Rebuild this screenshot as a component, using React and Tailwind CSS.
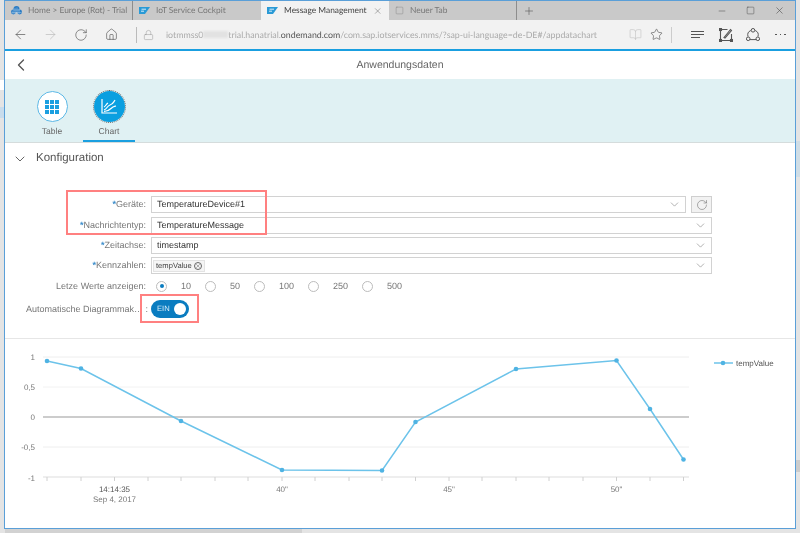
import React from 'react';
import { ArrowLeft, ArrowRight, BookOpen, ChevronDown, ChevronLeft, Home, Lock, Minus, Plus, RotateCw, Square, Star, X } from 'lucide-react';

function SapMark() {
  return (
    <svg width="11" height="7" viewBox="0 0 11 7" className="shrink-0">
      <path d="M0 0h11L6 7H0z" fill="#2a9ad6" />
      <path d="M2.500 2.200h4.500M2 4.200h3" stroke="#fff" strokeWidth="0.8" />
    </svg>
  );
}

function CloudMark() {
  return (
    <svg width="11" height="9" viewBox="0 0 11 9" className="shrink-0">
      <circle cx="5.500" cy="3" r="3" fill="#2b7cc4" />
      <circle cx="2.400" cy="6" r="2.400" fill="#2b7cc4" />
      <circle cx="8.600" cy="6" r="2.400" fill="#2b7cc4" />
      <path d="M2 4.500v4M4 2v6.500M6 1.500v7M8 3v5.500M0.500 6.500h10M2 4h7" stroke="#a9cde8" strokeWidth="0.5" />
    </svg>
  );
}

function Tab({ icon, label, active, close, sep }) {
  return (
    <div className={`w-[128px] h-full flex items-center gap-[6px] pl-[6px] pr-[5px] text-[8.4px] ${active ? 'bg-[#f2f2f2] text-[#444]' : 'text-[#777]'} ${sep ? 'border-r border-[#8d8d8d]' : ''}`}>
      {icon}
      <span className="flex-1 whitespace-nowrap">{label}</span>
      {close && <X className="w-[10px] h-[10px] text-[#666] mr-[2px]" strokeWidth={1.3} />}
    </div>
  );
}

function NoteIcon() {
  return (
    <svg width="14" height="14" viewBox="0 0 14 14" fill="none" stroke="#555" strokeWidth="1.1">
      <path d="M1.500 1.500h7M1.500 1.500v11M1.500 12.500h11M12.500 6v6.500" />
      <path d="M5 9.500l6.500-8 1 1-6.500 7.500z" />
      <rect x="0.500" y="0.500" width="2" height="2" fill="#555" />
      <rect x="0.500" y="11.500" width="2" height="2" fill="#555" />
      <rect x="11.500" y="11.500" width="2" height="2" fill="#555" />
    </svg>
  );
}

function ShareIcon() {
  return (
    <svg width="14" height="14" viewBox="0 0 14 14" fill="none" stroke="#555" strokeWidth="1">
      <path d="M4.800 2.500A5 5 0 0 0 2 8.500M9.200 2.500A5 5 0 0 1 12 8.500M3.800 11.600h6.400" />
      <circle cx="7" cy="2.300" r="1.800" />
      <circle cx="2.200" cy="10.800" r="1.800" />
      <circle cx="11.800" cy="10.800" r="1.800" />
    </svg>
  );
}

function Toolbar() {
  return (
    <div className="h-[29px] bg-[#f2f2f2] flex items-center text-[#555] shrink-0">
      <ArrowLeft className="w-[15px] h-[15px] ml-[8px]" strokeWidth={1.1} />
      <ArrowRight className="w-[15px] h-[15px] ml-[15px] text-[#bbb]" strokeWidth={1.1} />
      <RotateCw className="w-[14px] h-[14px] ml-[16px]" strokeWidth={1.1} />
      <Home className="w-[13px] h-[13px] ml-[17px]" strokeWidth={1.2} />
      <div className="w-px h-[16px] bg-[#bbb] ml-[18px]" />
      <Lock className="w-[11px] h-[12px] ml-[6px] text-[#999]" strokeWidth={1.1} />
      <div className="ml-[12px] w-[431px] text-[8.8px] text-[#aaa] whitespace-nowrap overflow-hidden flex items-center">
        <span>iotmmss0</span>
        <span className="w-[40px] h-[7px] bg-[#e2e2e2] blur-[1px]" />
        <span>trial.hanatrial.</span>
        <span className="text-[#555]">ondemand.com</span>
        <span>/com.sap.iotservices.mms/?sap-ui-language=de-DE#/appdatachart</span>
      </div>
      <BookOpen className="w-[13px] h-[13px] ml-[32px] text-[#c4c4c4]" strokeWidth={1.2} />
      <Star className="w-[13px] h-[13px] ml-[8px]" strokeWidth={1.2} />
      <div className="w-px h-[16px] bg-[#ccc] ml-[8px]" />
      <div className="ml-[19px] w-[13px] flex flex-col gap-[2px]">
        <span className="h-px w-[13px] bg-[#555]" />
        <span className="h-px w-[13px] bg-[#555]" />
        <span className="h-px w-[9px] bg-[#555]" />
      </div>
      <div className="ml-[15px]"><NoteIcon /></div>
      <div className="ml-[13px]"><ShareIcon /></div>
      <div className="ml-[15px] flex gap-[3px]">
        <span className="w-[1.5px] h-[1.5px] bg-[#555]" />
        <span className="w-[1.5px] h-[1.5px] bg-[#555]" />
        <span className="w-[1.5px] h-[1.5px] bg-[#555]" />
      </div>
    </div>
  );
}

function TableIcon() {
  return (
    <svg width="14" height="14" viewBox="0 0 14 14" fill="#1a9fe0">
      {[0, 5, 10].map((y) => [0, 5, 10].map((x) => <rect key={`${x}-${y}`} x={x} y={y} width="4" height="4" />))}
    </svg>
  );
}

function ChartIcon() {
  return (
    <svg width="16" height="15" viewBox="0 0 16 15" fill="none" stroke="#fff" strokeWidth="1.200">
      <path d="M1 0v14h15" />
      <path d="M3 11c3-1 3-4 6-5s3-2 5-5M3 12.500c3 0 5-1 7-3s3-2 5-2.500M3 8c2-1 2-3 4-4" />
    </svg>
  );
}

function Field({ label, required, children, className = 'h-[17px]' }) {
  return (
    <div className={`flex items-center ${className}`}>
      <div className="w-[120px] pt-[1px] text-right text-[9px] text-[#777] whitespace-nowrap">
        {required && <span className="text-[#3f8fcc] font-bold">*</span>}
        {label}
      </div>
      <div className="ml-[5px] flex-1 flex items-center min-w-0">{children}</div>
    </div>
  );
}

function SelectBox({ children, className = 'flex-1' }) {
  return (
    <div className={`h-[17px] border border-[#d2d2d2] bg-white flex items-center pl-[5px] pr-[4px] text-[9px] text-[#333] ${className}`}>
      <div className="flex-1 min-w-0 flex items-center pt-[1px]">{children}</div>
      <ChevronDown className="w-[13px] h-[13px] text-[#888]" strokeWidth={1.2} />
    </div>
  );
}

function Radio({ label, checked, width }) {
  return (
    <div className="flex items-center" style={{ width }}>
      <span className="w-[11px] h-[11px] rounded-full border border-[#bcbcbc] bg-white flex items-center justify-center shrink-0">
        {checked && <span className="w-[4px] h-[4px] rounded-full bg-[#0a7cc0]" />}
      </span>
      <span className="ml-[14px] pt-[1px] text-[9px] text-[#777]">{label}</span>
    </div>
  );
}

const points = [[47, 361], [81, 368.5], [181, 421], [282, 470], [382, 470.5], [415.5, 422], [516, 369], [616.5, 360.5], [650, 409], [683.5, 459.5]];
const ticks = [47, 81, 114.500, 148, 181, 215, 248, 282, 315, 349, 382, 415.500, 449, 482, 516, 549, 583, 616.500, 650, 683.500];

function Chart() {
  const labelClass = 'fill-[#777] text-[8px]';
  return (
    <svg viewBox="5 339 790 189" width="790" height="189" className="block">
      <line x1="43" x2="689" y1="357" y2="357" stroke="#eeeeee" />
      <line x1="43" x2="689" y1="387" y2="387" stroke="#f2f2f2" />
      <line x1="43" x2="689" y1="417" y2="417" stroke="#999999" />
      <line x1="43" x2="689" y1="447" y2="447" stroke="#eeeeee" />
      <line x1="43" x2="689" y1="477" y2="477" stroke="#dddddd" />
      {ticks.map((x) => <line key={x} x1={x} x2={x} y1="477" y2="481" stroke="#d0d0d0" />)}
      <text x="35" y="360" textAnchor="end" className={labelClass}>1</text>
      <text x="35" y="390" textAnchor="end" className={labelClass}>0,5</text>
      <text x="35" y="420" textAnchor="end" className={labelClass}>0</text>
      <text x="35" y="450" textAnchor="end" className={labelClass}>-0,5</text>
      <text x="35" y="481" textAnchor="end" className={labelClass}>-1</text>
      <polyline points={points.map((p) => p.join(',')).join(' ')} fill="none" stroke="#6cc3ea" strokeWidth="1.500" />
      {points.map(([x, y]) => <circle key={x} cx={x} cy={y} r="2.300" fill="#4fb3e3" />)}
      <text x="114.500" y="492" textAnchor="middle" className="fill-[#555] text-[8px]">14:14:35</text>
      <text x="114.500" y="502" textAnchor="middle" className={labelClass}>Sep 4, 2017</text>
      <text x="282" y="492" textAnchor="middle" className={labelClass}>40"</text>
      <text x="449" y="492" textAnchor="middle" className={labelClass}>45"</text>
      <text x="616.500" y="492" textAnchor="middle" className={labelClass}>50"</text>
      <line x1="714" x2="733" y1="363" y2="363" stroke="#6cc3ea" strokeWidth="1.500" />
      <circle cx="723" cy="363" r="2.300" fill="#4fb3e3" />
      <text x="736" y="366" className="fill-[#555] text-[8px]">tempValue</text>
    </svg>
  );
}

export default function App() {
  return (
    <div className="relative w-[800px] h-[533px] bg-[#e4e4e4] overflow-hidden blur-[0.35px] [text-rendering:geometricPrecision] font-[family-name:Liberation_Sans,Arial,sans-serif]">
      {/* bits of the window behind */}
      <div className="absolute left-0 top-[80px] w-[4px] h-[10px] bg-white" />
      <div className="absolute left-0 top-[107px] w-[4px] h-[11px] bg-[#c8dcec]" />
      <div className="absolute right-0 top-[141px] w-[4px] h-[36px] bg-[#cfdde6]" />
      <div className="absolute right-0 top-[460px] w-[4px] h-[12px] bg-[#cccccc]" />
      <div className="absolute left-[5px] top-[529px] w-[297px] h-[4px] bg-[#d2d2d2]" />

      <div className="ml-[4px] w-[792px] h-[529px] border border-[#5a9fd8] bg-white flex flex-col overflow-hidden">
        {/* tab strip */}
        <div className="h-[19px] bg-[#c9c9c9] flex items-center shrink-0 font-[family-name:Lato,sans-serif]">
          <Tab icon={<CloudMark />} label="Home > Europe (Rot) - Trial" sep />
          <Tab icon={<SapMark />} label="IoT Service Cockpit" />
          <Tab icon={<SapMark />} label="Message Management" active close />
          <Tab icon={<Square className="w-[9px] h-[9px]" strokeWidth={1} />} label="Neuer Tab" sep />
          <Plus className="w-[12px] h-[12px] ml-[6px] text-[#555]" strokeWidth={1.2} />
          <div className="ml-auto flex items-center gap-[19px] pr-[10px] text-[#444]">
            <Minus className="w-[10px] h-[10px]" strokeWidth={1.2} />
            <Square className="w-[9px] h-[9px]" strokeWidth={1.2} />
            <X className="w-[11px] h-[11px]" strokeWidth={1.2} />
          </div>
        </div>

        <div className="font-[family-name:Lato,sans-serif]"><Toolbar /></div>
        <div className="h-[2px] bg-[#1a9fe0] shrink-0" />

        {/* app header */}
        <div className="h-[28px] flex items-center relative shrink-0">
          <ChevronLeft className="w-[20px] h-[20px] ml-[6px] text-[#555]" strokeWidth={1.6} />
          <span className="flex-1 pt-[1px] text-center text-[10.5px] text-[#666] pr-[26px]">Anwendungsdaten</span>
        </div>

        {/* icon tabs */}
        <div className="h-[64px] bg-[#e0f1f3] border-b border-[#d5dcdc] flex items-start shrink-0">
          <div className="ml-[16px] w-[62px] flex flex-col items-center pt-[12px]">
            <div className="w-[31px] h-[31px] rounded-full border border-[#5cb8e6] bg-white flex items-center justify-center">
              <TableIcon />
            </div>
            <span className="text-[8.5px] text-[#666] mt-[3px]">Table</span>
          </div>
          <div className="w-[52px] h-full relative flex flex-col items-center pt-[12px] border-b-2 border-[#1a9fe0]">
            <div className="w-[31px] h-[31px] rounded-full bg-[#0a9fe0] flex items-center justify-center outline-1 outline-dotted outline-[#666]">
              <ChartIcon />
            </div>
            <span className="text-[8.5px] text-[#666] mt-[3px]">Chart</span>
          </div>
        </div>

        {/* configuration */}
        <div className="h-[196px] border-b border-[#e6e6e6] flex flex-col shrink-0">
          <div className="h-[31px] pt-[1px] flex items-center">
            <ChevronDown className="w-[16px] h-[16px] ml-[7px] text-[#666]" strokeWidth={1.5} />
            <span className="ml-[8px] text-[11.5px] text-[#555]">Konfiguration</span>
          </div>
          <div className="mt-[22px] ml-[21px] w-[686px] flex flex-col gap-[3px]">
            <Field label="Geräte:" required className="h-[17px] mb-[1px]">
              <SelectBox>TemperatureDevice#1</SelectBox>
              <div className="ml-[5px] w-[21px] h-[17px] border border-[#cfcfcf] bg-[#f2f2f2] flex items-center justify-center">
                <RotateCw className="w-[12px] h-[12px] text-[#777]" strokeWidth={1.2} />
              </div>
            </Field>
            <Field label="Nachrichtentyp:" required><SelectBox>TemperatureMessage</SelectBox></Field>
            <Field label="Zeitachse:" required><SelectBox>timestamp</SelectBox></Field>
            <Field label="Kennzahlen:" required>
              <SelectBox>
                <div className="-ml-[4px] -mt-[1px] h-[12px] w-[52px] px-[2px] bg-[#f5f5f5] border border-[#e3e3e3] flex items-center justify-between text-[7.6px] text-[#444]">
                  tempValue
                  <span className="w-[8px] h-[8px] rounded-full border border-[#666] flex items-center justify-center">
                    <X className="w-[6px] h-[6px] text-[#666]" strokeWidth={2} />
                  </span>
                </div>
              </SelectBox>
            </Field>
            <Field label="Letze Werte anzeigen:" className="h-[18px]">
              <div className="flex items-center ml-[5px]">
                <Radio label="10" checked width="49px" />
                <Radio label="50" width="49px" />
                <Radio label="100" width="54px" />
                <Radio label="250" width="54px" />
                <Radio label="500" width="54px" />
              </div>
            </Field>
            <Field label="Automatische Diagrammak… :" className="h-[18px] mt-[2px]">
              <div className="relative w-[38px] h-[18px] rounded-full bg-[#0a7cc0] flex items-center pl-[6px] text-[7.6px] text-[#d8eefa]">
                EIN
                <span className="absolute right-[3px] top-[3px] w-[12px] h-[12px] rounded-full bg-white" />
              </div>
            </Field>
          </div>
        </div>

        <Chart />
      </div>

      {/* annotation boxes drawn over the screenshot */}
      <div className="absolute left-[66px] top-[190px] w-[201px] h-[45px] border-[2.500px] border-[#ff8080]" />
      <div className="absolute left-[140px] top-[294px] w-[59px] h-[29px] border-[2.500px] border-[#ff8080]" />
    </div>
  );
}
